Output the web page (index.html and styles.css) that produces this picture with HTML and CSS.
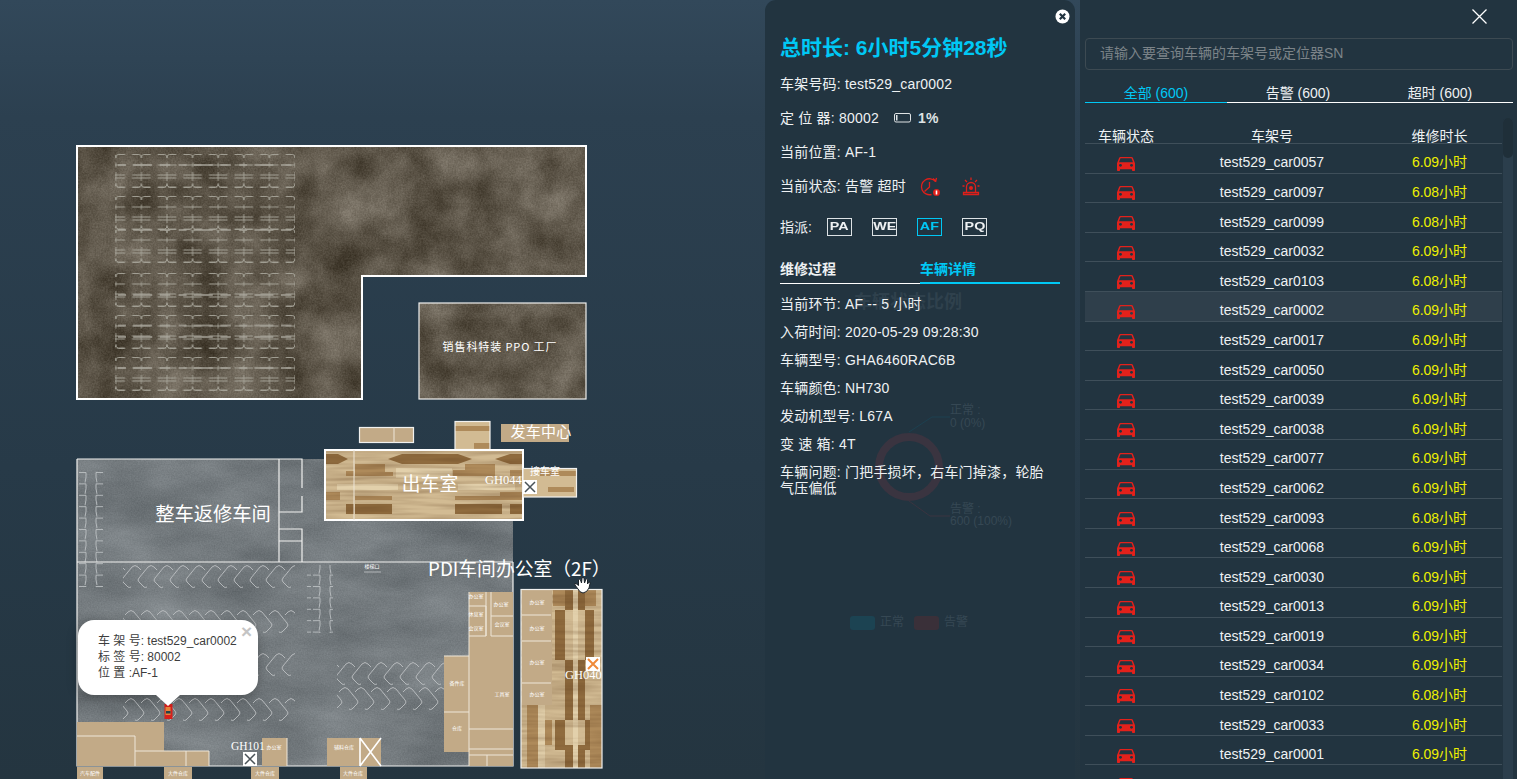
FILE: index.html
```html
<!DOCTYPE html>
<html lang="zh-CN">
<head>
<meta charset="utf-8">
<title>车辆维修地图</title>
<link rel="stylesheet" href="styles.css">
</head>
<body>
<svg class="defs" width="0" height="0" aria-hidden="true">
  <symbol id="car" viewBox="3 5 18 16" preserveAspectRatio="none">
    <path d="M18.92 6.01C18.72 5.42 18.16 5 17.5 5h-11c-.66 0-1.21.42-1.42 1.01L3 12v8c0 .55.45 1 1 1h1c.55 0 1-.45 1-1v-1h12v1c0 .55.45 1 1 1h1c.55 0 1-.45 1-1v-8l-2.08-5.99zM6.5 16c-.83 0-1.5-.67-1.5-1.5S5.67 13 6.5 13s1.5.67 1.5 1.5S7.33 16 6.5 16zm11 0c-.83 0-1.5-.67-1.5-1.5s.67-1.5 1.5-1.5 1.5.67 1.5 1.5-.67 1.5-1.5 1.5zM5 11l1.5-4.5h11L19 11H5z"/>
  </symbol>
</svg>

<main class="map">
  <svg class="plan" width="765" height="779" viewBox="0 0 765 779">
    <defs>
      <filter id="brownTex" x="0" y="0" width="1" height="1" color-interpolation-filters="sRGB">
        <feTurbulence type="fractalNoise" baseFrequency=".022" numOctaves="5" seed="8" result="a"/>
        <feColorMatrix in="a" values=".36 0 0 0 .19  .36 0 0 0 .16  .36 0 0 0 .11  0 0 0 0 1" result="a2"/>
        <feTurbulence type="fractalNoise" baseFrequency=".6" numOctaves="2" seed="3" result="b"/>
        <feColorMatrix in="b" values=".14 0 0 0 0  .14 0 0 0 0  .14 0 0 0 0  0 0 0 0 1" result="b2"/>
        <feComposite in="a2" in2="b2" operator="arithmetic" k2="1" k3="1" k4="-.07"/>
      </filter>
      <filter id="grayTex" x="0" y="0" width="1" height="1" color-interpolation-filters="sRGB">
        <feTurbulence type="fractalNoise" baseFrequency=".01 .025" numOctaves="4" seed="4" result="a"/>
        <feColorMatrix in="a" values=".2 0 0 0 .355  .2 0 0 0 .38  .2 0 0 0 .395  0 0 0 0 1" result="a2"/>
        <feTurbulence type="fractalNoise" baseFrequency=".7" numOctaves="2" seed="6" result="b"/>
        <feColorMatrix in="b" values=".09 0 0 0 0  .09 0 0 0 0  .09 0 0 0 0  0 0 0 0 1" result="b2"/>
        <feComposite in="a2" in2="b2" operator="arithmetic" k2="1" k3="1" k4="-.045"/>
      </filter>
      <filter id="grain" x="0" y="0" width="1" height="1" color-interpolation-filters="sRGB">
        <feTurbulence type="fractalNoise" baseFrequency=".015 .22" numOctaves="2" seed="2"/>
        <feColorMatrix values="0 0 0 0 .35  0 0 0 0 .22  0 0 0 0 .1  .6 0 0 0 -.2"/>
      </filter>
      <clipPath id="lotClip"><path d="M77 146H586V276H362V399H77Z"/></clipPath>
      <clipPath id="woodA"><rect x="325" y="450" width="198" height="70"/></clipPath>
      <clipPath id="woodB"><rect x="521" y="589" width="81" height="179"/></clipPath>

      <pattern id="stallH" width="25.6" height="33" patternUnits="userSpaceOnUse" x="-12" y="0">
        <path class="ln-sand" d="M3.500 .5H10.500Q12.800 .5 12.800 4M22.100 .5H15.100Q12.800 .5 12.800 4M3.500 11H22.100M12.800 8.500V13.500M3.500 21H22.100M3.500 24H22.100M12.800 18V27M3.500 33H10.500Q12.800 33 12.800 29.500M22.100 33H15.100Q12.800 33 12.800 29.500"/>
      </pattern>
      <pattern id="stallV" width="26" height="11.4" patternUnits="userSpaceOnUse" x="78" y="472">
        <path class="ln-pale" d="M1 .5H8Q8.500 5 7 10.500M25 .5H18Q17.500 5 19 10.500"/>
      </pattern>
      <pattern id="diagA" width="16" height="24" patternUnits="userSpaceOnUse" x="120" y="565">
        <path class="ln-pale" d="M3 13L12 2Q15 -1 18 2L21 5M3 13Q1 15 3 17L8 22Q9 23 11 22M-13 13L-4 2Q-1 -1 2 2L5 5M-13 13Q-15 15 -13 17L-8 22Q-7 23 -5 22"/>
      </pattern>
      <pattern id="diagB" width="16" height="24" patternUnits="userSpaceOnUse" x="122" y="610">
        <path class="ln-pale" d="M21 13L12 2Q9 -1 6 2L3 5M21 13Q23 15 21 17L16 22Q15 23 13 22M5 13L-4 2Q-7 -1 -10 2L-13 5M5 13Q7 15 5 17L0 22Q-1 23 -3 22"/>
      </pattern>
      <pattern id="diagC" width="16" height="24" patternUnits="userSpaceOnUse" x="334" y="662">
        <path class="ln-pale" d="M3 13L12 2Q15 -1 18 2L21 5M3 13Q1 15 3 17L8 22Q9 23 11 22M-13 13L-4 2Q-1 -1 2 2L5 5M-13 13Q-15 15 -13 17L-8 22Q-7 23 -5 22"/>
      </pattern>
      <pattern id="diagD" width="16" height="24" patternUnits="userSpaceOnUse" x="336" y="687">
        <path class="ln-pale" d="M21 13L12 2Q9 -1 6 2L3 5M21 13Q23 15 21 17L16 22Q15 23 13 22M5 13L-4 2Q-7 -1 -10 2L-13 5M5 13Q7 15 5 17L0 22Q-1 23 -3 22"/>
      </pattern>
      <pattern id="diagE" width="16" height="24" patternUnits="userSpaceOnUse" x="122" y="698">
        <path class="ln-pale" d="M21 13L12 2Q9 -1 6 2L3 5M21 13Q23 15 21 17L16 22Q15 23 13 22M5 13L-4 2Q-7 -1 -10 2L-13 5M5 13Q7 15 5 17L0 22Q-1 23 -3 22"/>
      </pattern>
      <pattern id="diagF" width="16" height="24" patternUnits="userSpaceOnUse" x="120" y="653">
        <path class="ln-pale" d="M3 13L12 2Q15 -1 18 2L21 5M3 13Q1 15 3 17L8 22Q9 23 11 22M-13 13L-4 2Q-1 -1 2 2L5 5M-13 13Q-15 15 -13 17L-8 22Q-7 23 -5 22"/>
      </pattern>
    </defs>

    <!-- 上方厂房 -->
    <g clip-path="url(#lotClip)"><rect class="tex-brown" x="77" y="146" width="510" height="254"/></g>
    <rect class="stalls" transform="translate(115 154)" width="180" height="34"/>
    <rect class="stalls" transform="translate(115 196)" width="180" height="67"/>
    <rect class="stalls" transform="translate(115 273)" width="180" height="34"/>
    <rect class="stalls" transform="translate(115 315)" width="180" height="34"/>
    <rect class="stalls" transform="translate(115 357)" width="180" height="34"/>
    <path class="ln-bright" d="M118 165H293M118 230H293M118 295H293M118 325.500H293M118 337H293M118 368H293"/>
    <path class="wall" d="M77 146H586V276H362V399H77Z"/>

    <rect class="tex-brown" x="419" y="303" width="167" height="96"/>
    <rect class="wall-thin" x="419" y="303" width="167" height="96"/>
    <text class="t11" x="500" y="351" text-anchor="middle">销售科特装 PPO 工厂</text>

    <!-- 下方车间 -->
    <rect class="tex-gray" x="77" y="459" width="436" height="307"/>
    <rect class="stalls-v" x="78" y="472" width="26" height="115"/>
    <rect class="stalls-v" x="307" y="565" width="26" height="68"/>
    <rect class="diag-a" x="123" y="565" width="172" height="24"/>
    <rect class="diag-b" x="123" y="610" width="172" height="24"/>
    <rect class="diag-f" x="123" y="653" width="172" height="24"/>
    <rect class="diag-e" x="123" y="698" width="172" height="24"/>
    <rect class="diag-c" x="337" y="662" width="171" height="24"/>
    <rect class="diag-d" x="337" y="687" width="171" height="24"/>

    <path class="wall-thin" d="M77 459H279M77 459V766H513V562M77 562H513"/>
    <path class="wall-thin" d="M279 459H302V488M302 496V512H279M279 459V562M279 529H302V562M279 541H302"/>
    <path class="ln-pale" d="M364 572H381"/>
    <text class="t5" x="372" y="568" text-anchor="middle">楼梯口</text>

    <text class="t19" x="213" y="521" text-anchor="middle">整车返修车间</text>

    <!-- 右侧办公室 -->
    <rect class="tan" x="469" y="592" width="44" height="174"/>
    <rect class="tan" x="444" y="656" width="25" height="96"/>
    <path class="ln-room" d="M469 592V636M469 636H486V606H469M486 592V636M491 592V636H513M491 616H513M444 656H469M444 712H469M469 636V766M469 729H513M469 749H513M469 755H513M487 755V766"/>
    <text class="t5" x="476" y="598" text-anchor="middle">办公室</text>
    <text class="t5" x="476" y="616" text-anchor="middle">休息室</text>
    <text class="t5" x="476" y="630" text-anchor="middle">会议室</text>
    <text class="t5" x="501" y="606" text-anchor="middle">办公室</text>
    <text class="t5" x="502" y="626" text-anchor="middle">会议室</text>
    <text class="t5" x="457" y="685" text-anchor="middle">备件库</text>
    <text class="t5" x="457" y="730" text-anchor="middle">仓库</text>
    <text class="t5" x="502" y="696" text-anchor="middle">工具室</text>

    <!-- 左下房间 -->
    <rect class="tan" x="77" y="722" width="87" height="44"/>
    <rect class="tan" x="135" y="751" width="74" height="15"/>
    <path class="ln-room" d="M77 736H135V766M135 751H209V766M186 751V766"/>
    <rect class="tan" x="262" y="738" width="25" height="28"/>
    <path class="ln-room" d="M287 738V766"/>
    <text class="t5" x="274" y="749" text-anchor="middle">办公室</text>
    <rect class="tan" x="327" y="738" width="54" height="28"/>
    <text class="t5" x="344" y="749" text-anchor="middle">辅料仓库</text>
    <path class="x-mark" d="M360 738V766M360 738L381 766M381 738L360 766"/>
    <text class="gh gh-s" x="231" y="750">GH101</text>
    <rect class="xbox" x="243" y="752" width="14" height="14"/>
    <path class="xline" d="M245 754L255 764M255 754L245 764"/>
    <rect class="tan" x="77" y="767" width="26" height="14"/>
    <rect class="tan" x="164" y="767" width="28" height="14"/>
    <rect class="tan" x="251" y="767" width="28" height="14"/>
    <rect class="tan" x="340" y="767" width="27" height="14"/>
    <text class="t5" x="90" y="775" text-anchor="middle">汽车配件</text>
    <text class="t5" x="178" y="775" text-anchor="middle">大件仓库</text>
    <text class="t5" x="265" y="775" text-anchor="middle">大件仓库</text>
    <text class="t5" x="353" y="775" text-anchor="middle">大件仓库</text>

    <!-- 出车室 -->
    <rect class="tan" x="359" y="427" width="55" height="16"/>
    <rect class="wall-thin" x="359.500" y="427.500" width="54" height="15"/>
    <path class="ln-room" d="M394 427V443"/>
    <rect class="wood-base" x="455" y="421" width="35" height="28"/>
    <path class="wd-mid" d="M455 426H490V431H455ZM474 443H490V449H474Z"/>
    <rect class="wall-thin" x="455" y="421.500" width="35" height="28"/>
    <rect class="tan" x="501" y="424" width="68" height="18"/>
    <text class="t15" x="541" y="437" text-anchor="middle">发车中心</text>

    <g clip-path="url(#woodA)">
      <rect class="wood-base" x="325" y="450" width="198" height="70"/>
      <path class="wd-dark" d="M325 454H338L348 459L338 464H325ZM388 459L402 454H458L472 459L458 464H402ZM495 459L510 454H523V464H510Z"/>
      <path class="wd-mid" d="M355 464H385V472H393V476H355ZM465 464H495V476H453V470H465ZM346 471H354V476H346ZM510 470H523V476H510Z"/>
      <path class="wd-dark" d="M355 504H392V514H355ZM455 504H502V514H455ZM346 504H354V514H346ZM510 504H523V514H510Z"/>
      <path class="wd-light" d="M337 484H398V490H337ZM458 484H515V490H458ZM396 468H452V478H396Z"/>
      <path class="wd-mid" d="M325 492H340V500H325ZM500 492H523V500H500ZM355 496H392V500H355ZM455 496H502V500H455Z"/>
      <rect class="grain" x="325" y="450" width="198" height="70"/>
    </g>
    <rect class="wall" x="325" y="450" width="198" height="70"/>
    <path class="ln-room" d="M354 450V520"/>
    <text class="t18" x="430" y="491" text-anchor="middle">出车室</text>
    <text class="gh" x="485" y="484">GH044</text>

    <rect class="wood-base" x="523" y="468" width="54" height="29"/>
    <path class="wd-mid" d="M540 471H577V476H540ZM548 487H574V492H548Z"/>
    <rect class="wall-thin" x="523" y="468.500" width="53.500" height="28.500"/>
    <text class="t10" x="545" y="475" text-anchor="middle">接车室</text>
    <rect class="xbox" x="523" y="480" width="14" height="14"/>
    <path class="xline" d="M525 482L535 492M535 482L525 492"/>

    <!-- PDI -->
    <text class="t18" x="428" y="576">PDI车间办公室（2F）</text>
    <g clip-path="url(#woodB)">
      <rect class="wood-base" x="521" y="589" width="81" height="179"/>
      <path class="wd-dark" d="M565 590H573V610H565ZM578 590H585V610H578ZM555 610H565V660H555ZM585 610H594V660H585ZM565 660H573V720H565ZM578 660H585V720H578ZM555 720H565V750H555ZM585 720H594V750H585ZM565 745H573V768H565ZM578 745H585V768H578Z"/>
      <path class="wd-mid" d="M527 705H538V768H527ZM553 590H565V606H553ZM585 590H596V606H585ZM590 705H602V768H590ZM540 720H552V745H540Z"/>
      <path class="wd-light" d="M573 590H578V768H573ZM538 705H545V768H538Z"/>
      <rect class="grain" x="521" y="589" width="81" height="179"/>
    </g>
    <rect class="tan" x="522" y="590" width="30" height="115"/>
    <path class="ln-room" d="M522 615H551M522 641H551M522 683H551"/>
    <text class="t5" x="537" y="604" text-anchor="middle">办公室</text>
    <text class="t5" x="537" y="630" text-anchor="middle">办公室</text>
    <text class="t5" x="537" y="664" text-anchor="middle">办公室</text>
    <text class="t5" x="537" y="696" text-anchor="middle">办公室</text>
    <rect class="wall-thin" x="521" y="589.500" width="81" height="178.500"/>
    <rect class="xbox" x="586" y="657" width="14" height="14"/>
    <path class="xorange" d="M588 659L598 669M598 659L588 669"/>
    <text class="gh" x="565" y="679">GH040</text>

    <!-- 手形光标 -->
    <path class="hand" d="M578 589L575 585Q574 583 576 583.500L578.500 585.500L578.500 580Q579 578 580.500 580L581.500 583L582 578Q583 576.500 584 578L584.500 583L586 579Q587 578 587.500 579.500L587.500 584L589 582Q590.500 581.500 590 583.500L589 588Q587 592.500 583 593Q579.500 592.500 578 589Z"/>

    <!-- 车辆标记 -->
    <rect class="mk-red" x="164.500" y="704" width="8" height="15"/>
    <rect class="mk-org" x="165.500" y="707" width="5" height="8"/>
    <rect class="mk-dark" x="166" y="711" width="4.500" height="2.500"/>
  </svg>

  <aside class="popup">
    <button class="popup-close" type="button">×</button>
    <p>车 架 号: test529_car0002</p>
    <p>标 签 号: 80002</p>
    <p>位 置 :AF-1</p>
  </aside>
</main>

<section class="detail">
  <div class="ghost">
    <svg width="310" height="779" viewBox="0 0 310 779">
      <circle class="g-ring" cx="144" cy="467" r="30"/>
      <path class="g-line-teal" d="M144 432L167 417H185"/>
      <path class="g-line-red" d="M144 501L165 516H185"/>
      <text class="g-title" x="143" y="308" text-anchor="middle">车辆状态比例</text>
      <text class="g-text" x="185" y="414">正常 :</text>
      <text class="g-text" x="185" y="427">0 (0%)</text>
      <text class="g-text" x="185" y="513">告警 :</text>
      <text class="g-text" x="185" y="525">600 (100%)</text>
      <rect class="g-teal" x="85" y="616" width="25" height="14" rx="3"/>
      <text class="g-text" x="115" y="626">正常</text>
      <rect class="g-red" x="149" y="616" width="25" height="14" rx="3"/>
      <text class="g-text" x="179" y="626">告警</text>
    </svg>
  </div>

  <button class="detail-close" type="button" aria-label="关闭">
    <svg width="15" height="15" viewBox="0 0 15 15"><circle class="dc-bg" cx="7.500" cy="7.500" r="7"/><path class="dc-x" d="M4.800 4.800L10.200 10.200M10.200 4.800L4.800 10.200"/></svg>
  </button>

  <h1 class="total">总时长: 6小时5分钟28秒</h1>
  <div class="info">车架号码: test529_car0002</div>
  <div class="info"><span>定 位 器: 80002</span>
    <svg class="battery" width="18" height="10" viewBox="0 0 18 10"><rect class="bat-body" x=".5" y=".5" width="16" height="8.500" rx="1.500"/><rect class="bat-fill" x="2" y="2" width="1.500" height="5.500"/></svg>
    <b class="pct">1%</b>
  </div>
  <div class="info">当前位置: AF-1</div>
  <div class="info"><span>当前状态: 告警 超时</span>
    <svg class="st-icon" width="20" height="20" viewBox="0 0 20 20"><path class="ic-red" d="M15.500 5.500A8 8 0 1 0 11.500 18.500M9.500 6V11L4.500 15.500M13 2.500L15.800 5L16.500 1.800"/><circle class="ic-dot" cx="16.500" cy="16.500" r="3.500"/><rect class="ic-w" x="15.700" y="14.500" width="1.600" height="4"/></svg>
    <svg class="st-icon siren" width="20" height="20" viewBox="0 0 20 20"><path class="ic-red" d="M5.500 16V11A4.500 4.500 0 0 1 14.500 11V16M2.500 16.500H17.500V18.500H2.500ZM10 1.500V4M4 4L6 6M16 4L14 6M1.500 10H3.500M16.500 10H18.500"/><circle class="ic-dot" cx="10" cy="12" r="2"/></svg>
  </div>
  <div class="assign">
    <span class="assign-label">指派:</span>
    <span class="code"><b>PA</b></span>
    <span class="code"><b>WE</b></span>
    <span class="code code-on"><b>AF</b></span>
    <span class="code"><b>PQ</b></span>
  </div>
  <div class="subtabs">
    <span class="subtab">维修过程</span>
    <span class="subtab subtab-on">车辆详情</span>
  </div>
  <ul class="facts">
    <li>当前环节: AF -- 5 小时</li>
    <li>入荷时间: 2020-05-29 09:28:30</li>
    <li>车辆型号: GHA6460RAC6B</li>
    <li>车辆颜色: NH730</li>
    <li>发动机型号: L67A</li>
    <li>变 速 箱: 4T</li>
    <li>车辆问题: 门把手损坏，右车门掉漆，轮胎气压偏低</li>
  </ul>
</section>

<section class="list">
  <div class="list-top">
    <svg width="15" height="15" viewBox="0 0 15 15"><path class="close-x" d="M.5 .5L14.500 14.500M14.500 .5L.5 14.500"/></svg>
  </div>
  <div class="search">请输入要查询车辆的车架号或定位器SN</div>
  <div class="tabs">
    <span class="tab tab-on">全部 (600)</span>
    <span class="tab">告警 (600)</span>
    <span class="tab">超时 (600)</span>
  </div>
  <div class="table-wrap">
    <div class="table">
      <div class="row head"><span>车辆状态</span><span>车架号</span><span>维修时长</span></div>
      <div class="row"><span><svg class="car"><use href="#car"/></svg></span><span>test529_car0057</span><span class="hours">6.09小时</span></div>
      <div class="row"><span><svg class="car"><use href="#car"/></svg></span><span>test529_car0097</span><span class="hours">6.08小时</span></div>
      <div class="row"><span><svg class="car"><use href="#car"/></svg></span><span>test529_car0099</span><span class="hours">6.08小时</span></div>
      <div class="row"><span><svg class="car"><use href="#car"/></svg></span><span>test529_car0032</span><span class="hours">6.09小时</span></div>
      <div class="row"><span><svg class="car"><use href="#car"/></svg></span><span>test529_car0103</span><span class="hours">6.08小时</span></div>
      <div class="row row-on"><span><svg class="car"><use href="#car"/></svg></span><span>test529_car0002</span><span class="hours">6.09小时</span></div>
      <div class="row"><span><svg class="car"><use href="#car"/></svg></span><span>test529_car0017</span><span class="hours">6.09小时</span></div>
      <div class="row"><span><svg class="car"><use href="#car"/></svg></span><span>test529_car0050</span><span class="hours">6.09小时</span></div>
      <div class="row"><span><svg class="car"><use href="#car"/></svg></span><span>test529_car0039</span><span class="hours">6.09小时</span></div>
      <div class="row"><span><svg class="car"><use href="#car"/></svg></span><span>test529_car0038</span><span class="hours">6.09小时</span></div>
      <div class="row"><span><svg class="car"><use href="#car"/></svg></span><span>test529_car0077</span><span class="hours">6.09小时</span></div>
      <div class="row"><span><svg class="car"><use href="#car"/></svg></span><span>test529_car0062</span><span class="hours">6.09小时</span></div>
      <div class="row"><span><svg class="car"><use href="#car"/></svg></span><span>test529_car0093</span><span class="hours">6.08小时</span></div>
      <div class="row"><span><svg class="car"><use href="#car"/></svg></span><span>test529_car0068</span><span class="hours">6.09小时</span></div>
      <div class="row"><span><svg class="car"><use href="#car"/></svg></span><span>test529_car0030</span><span class="hours">6.09小时</span></div>
      <div class="row"><span><svg class="car"><use href="#car"/></svg></span><span>test529_car0013</span><span class="hours">6.09小时</span></div>
      <div class="row"><span><svg class="car"><use href="#car"/></svg></span><span>test529_car0019</span><span class="hours">6.09小时</span></div>
      <div class="row"><span><svg class="car"><use href="#car"/></svg></span><span>test529_car0034</span><span class="hours">6.09小时</span></div>
      <div class="row"><span><svg class="car"><use href="#car"/></svg></span><span>test529_car0102</span><span class="hours">6.08小时</span></div>
      <div class="row"><span><svg class="car"><use href="#car"/></svg></span><span>test529_car0033</span><span class="hours">6.09小时</span></div>
      <div class="row"><span><svg class="car"><use href="#car"/></svg></span><span>test529_car0001</span><span class="hours">6.09小时</span></div>
      <div class="row"><span><svg class="car"><use href="#car"/></svg></span><span></span><span></span></div>
    </div>
    <div class="scrollbar"><div class="thumb"></div></div>
  </div>
</section>
</body>
</html>
```

FILE: styles.css
```css
* { box-sizing: border-box; }
html, body { height: 100%; }
body {
  margin: 0;
  width: 1517px;
  height: 779px;
  overflow: hidden;
  display: flex;
  align-items: flex-start;
  color: #eef1f3;
  font: 14px/1.2 "Liberation Sans", "Noto Sans CJK SC", sans-serif;
  background: linear-gradient(180deg, #32485a 0, #2c4050 15%, #273a48 60%, #243540 100%);
}
.defs { position: absolute; }
button { border: 0; background: none; padding: 0; font: inherit; }
p { margin: 0; }

/* map */
.map { position: relative; flex: 0 0 765px; height: 779px; }
.plan { display: block; }
.plan text { font-family: "Noto Sans CJK SC", "Liberation Sans", sans-serif; fill: #fff; }
.tex-brown { filter: url(#brownTex); }
.tex-gray { filter: url(#grayTex); }
.grain { filter: url(#grain); }
.tan { fill: #c2aa87; }
.wood-base { fill: #d2bb93; }
.wd-dark { fill: #8f6b3e; }
.wd-mid { fill: #ae8a5a; }
.wd-light { fill: #e2d0ab; }
.wall { fill: none; stroke: #fff; stroke-width: 2; }
.wall-thin { fill: none; stroke: #f1f1ef; stroke-width: 1.2; }
.ln-room { fill: none; stroke: #eee6d8; stroke-width: 1; }
.ln-sand { fill: none; stroke: #a8a69b; stroke-width: .9; }
.ln-bright { fill: none; stroke: #aaa79c; stroke-width: 1.8; stroke-dasharray: 8 7.200 19 7.600 10.400 8.400; stroke-dashoffset: 0; opacity: .7; }
.ln-pale { fill: none; stroke: #bcc0c2; stroke-width: .9; }
.stalls { fill: url(#stallH); }
.stalls-v { fill: url(#stallV); }
.diag-a { fill: url(#diagA); }
.diag-b { fill: url(#diagB); }
.diag-c { fill: url(#diagC); }
.diag-d { fill: url(#diagD); }
.diag-e { fill: url(#diagE); }
.diag-f { fill: url(#diagF); }
.x-mark { fill: none; stroke: #fff; stroke-width: 1.6; }
.xbox { fill: #fff; }
.xline { fill: none; stroke: #4a5358; stroke-width: 1.500; }
.xorange { fill: none; stroke: #ef8a3a; stroke-width: 2; }
.hand { fill: #fff; stroke: #1b2228; stroke-width: 1; }
.mk-red { fill: #d5201c; }
.mk-org { fill: #e8843a; }
.mk-dark { fill: #24424a; }
.plan .t5 { font-size: 5px; }
.plan .t10 { font-size: 10px; }
.plan .t11 { font-size: 11px; letter-spacing: .9px; }
.plan .t15 { font-size: 15px; letter-spacing: .3px; }
.plan .t18 { font-size: 18.800px; }
.plan .t19 { font-size: 19.300px; }
.plan .gh { font-family: "Liberation Serif", serif; font-size: 12.500px; }
.plan .gh-s { font-size: 11.500px; }

.popup {
  position: absolute;
  left: 78px;
  top: 620px;
  width: 180px;
  height: 75px;
  padding: 13px 0 0 20px;
  border-radius: 16px;
  background: #fff;
  color: #3d3d3d;
  font-size: 12px;
  line-height: 16px;
  box-shadow: 0 3px 12px rgba(0, 0, 0, .25);
}
.popup::after {
  content: "";
  position: absolute;
  left: 78px;
  top: 75px;
  border: 12px solid transparent;
  border-top: 11px solid #fff;
  border-bottom: 0;
}
.popup-close {
  position: absolute;
  right: 6px;
  top: 2px;
  color: #c4c4c4;
  font-size: 19px;
  line-height: 19px;
  font-weight: bold;
}

/* detail panel */
.detail {
  position: relative;
  flex: 0 0 310px;
  height: 779px;
  padding: 36px 15px 0;
  border-radius: 11px 11px 0 0;
  background: #223440;
}
.ghost { position: absolute; left: 0; top: 0; }
.ghost svg { display: block; }
.ghost text { font-family: "Liberation Sans", "Noto Sans CJK SC", sans-serif; }
.g-ring { fill: none; stroke: #3a3440; stroke-width: 8; }
.g-line-teal { fill: none; stroke: #1c4050; }
.g-line-red { fill: none; stroke: #3a3440; }
.g-title { font-size: 18px; font-weight: bold; fill: #2f414d; }
.g-text { font-size: 12px; fill: #364854; }
.g-teal { fill: #1c4352; }
.g-red { fill: #3a3039; }
.detail-close { position: absolute; right: 5px; top: 9px; width: 15px; height: 15px; }
.detail-close svg { display: block; }
.dc-bg { fill: #fff; }
.dc-x { fill: none; stroke: #223440; stroke-width: 2.200; }
.total {
  position: relative;
  margin: 0 0 7px;
  color: #00c8f5;
  font-size: 21px;
  line-height: 24px;
  font-weight: bold;
}
.info {
  position: relative;
  display: flex;
  align-items: center;
  height: 34px;
  letter-spacing: .2px;
}
.battery { margin-left: 15px; }
.bat-body { fill: none; stroke: #dfe3e5; }
.bat-fill { fill: #dfe3e5; }
.pct { margin-left: 6px; font-weight: bold; color: #dfe3e5; }
.st-icon { margin-left: 14px; }
.siren { margin-left: 21px; }
.ic-red { fill: none; stroke: #e01f1a; stroke-width: 1.300; }
.ic-dot { fill: #e01f1a; }
.ic-w { fill: #fff; }
.assign {
  position: relative;
  display: flex;
  align-items: center;
  height: 34px;
  margin-top: 7px;
}
.assign-label { width: 47px; }
.code {
  display: flex;
  align-items: center;
  justify-content: center;
  width: 25px;
  height: 18px;
  margin-right: 20px;
  border: 1px solid #dde2e5;
  font-size: 11px;
}
.code b { display: block; transform: scaleX(1.3); }
.code-on { border-color: #00c8f5; color: #00c8f5; }
.subtabs { position: relative; display: flex; width: 280px; margin-top: 13px; }
.subtab {
  flex: 1;
  height: 27px;
  border-bottom: 1px solid #fff;
  font-weight: bold;
  line-height: 24px;
}
.subtab-on { color: #00c8f5; border-bottom: 2px solid #00c8f5; }
.facts {
  position: relative;
  width: 270px;
  margin: 12px 0 0;
  padding: 0;
  list-style: none;
  letter-spacing: .2px;
}
.facts li { margin-bottom: 12px; line-height: 16px; }

/* list panel */
.list {
  flex: 0 0 437px;
  height: 779px;
  margin-left: 5px;
  padding: 0 5px;
  background: #223440;
}
.list-top { display: flex; justify-content: flex-end; height: 38px; padding: 9px 26px 0 0; }
.close-x { fill: none; stroke: #fff; stroke-width: 1.300; }
.search {
  height: 32px;
  padding-left: 14px;
  border: 1px solid #3d4a52;
  border-radius: 4px;
  color: #7b8388;
  line-height: 29px;
}
.tabs { display: flex; height: 19px; margin-top: 14px; border-bottom: 1px solid #fff; }
.tab { width: 142px; height: 19px; line-height: 18px; text-align: center; }
.tab-on { color: #00c8f5; border-bottom: 1px solid #00c8f5; }
.table-wrap { display: flex; gap: 1px; margin-top: 15px; }
.table { width: 417px; padding-top: 7px; }
.row {
  display: grid;
  grid-template-columns: 82px 210px 125px;
  align-items: center;
  height: 29.600px;
  padding-top: 9px;
  border-bottom: 1px solid #3f4f5a;
  text-align: center;
}
.row span { display: flex; align-items: center; justify-content: center; }
.row.head { height: 19px; padding-top: 2px; border-bottom-color: #3f4f5a; line-height: 18px; }
.row-on { background: #2f3f4b; }
.hours { color: #eef000; }
.car { width: 18px; height: 14px; margin-top: 2px; fill: #e3211b; }
.scrollbar { position: relative; width: 10px; height: 661px; border-radius: 5px 5px 0 0; background: #2b3e4c; }
.thumb { height: 40px; border-radius: 5px; background: #1f2f39; }
```
